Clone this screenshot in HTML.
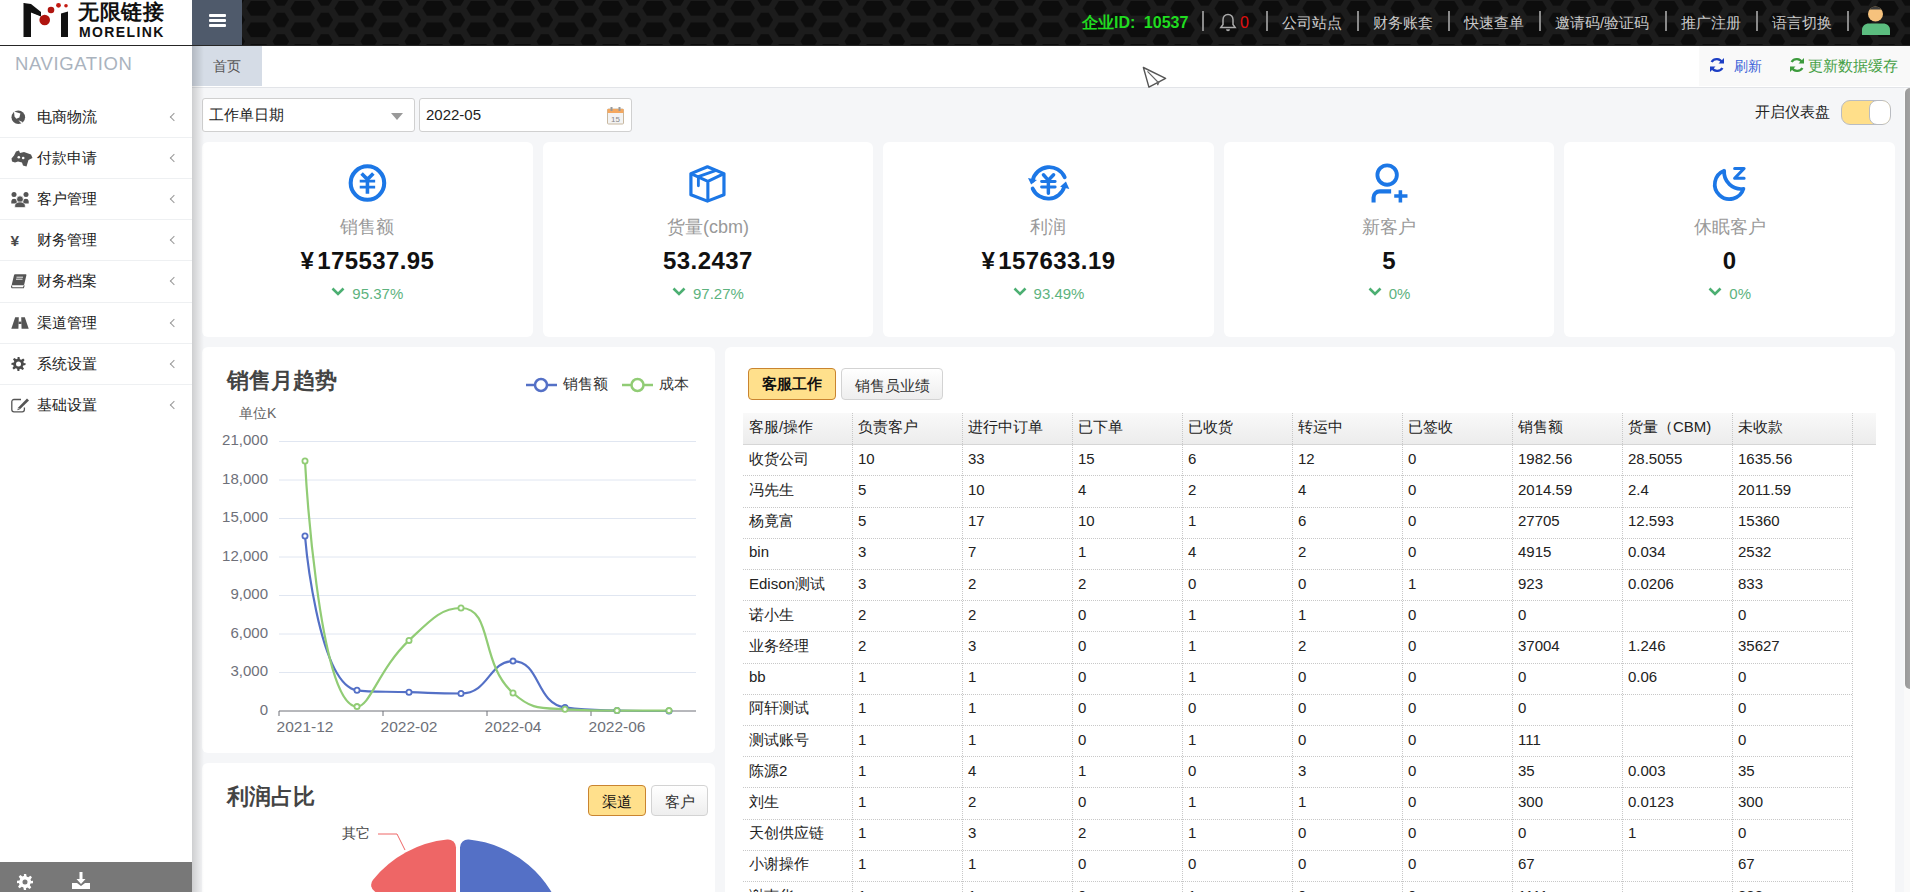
<!DOCTYPE html>
<html><head><meta charset="utf-8">
<style>
*{box-sizing:border-box;margin:0;padding:0}
html,body{width:1910px;height:892px;overflow:hidden;background:#f5f6f8;font-family:"Liberation Sans",sans-serif;color:#333}
.abs{position:absolute}
#hdr{position:absolute;left:0;top:0;width:1910px;height:46px;background:#1b1b1b;border-bottom:1px solid #262626}
#logo{position:absolute;left:0;top:0;width:192px;height:45px;background:#fff}
#ham{position:absolute;left:192px;top:0;width:50px;height:45px;background:#4f5a6b}
#ham i{position:absolute;left:17px;width:17px;height:3px;background:#fff;border-radius:1px}
#side{position:absolute;left:0;top:46px;width:192px;height:846px;background:#fff;z-index:5}
#sshadow{position:absolute;left:192px;top:46px;width:12px;height:846px;background:linear-gradient(90deg,rgba(0,0,0,.16),rgba(0,0,0,0));z-index:4}
#tabbar{position:absolute;left:192px;top:46px;width:1718px;height:42px;background:#fff;border-bottom:1px solid #e2e4e8}
.card{position:absolute;background:#fff;border-radius:6px}
.hl{position:absolute;top:0;height:45px;line-height:45px;font-size:15px;color:#c9c9c9;white-space:nowrap}
.sep{position:absolute;top:11px;width:2px;height:20px;background:#8a8a8a}
.nav{position:absolute;left:0;width:192px;height:41.12px;border-bottom:1px solid #eef0f2}
.nav span{position:absolute;left:37px;top:0;line-height:40px;font-size:15px;color:#222}
.nav svg{position:absolute}
.nav b{position:absolute;left:171px;top:17px;width:6px;height:6px;border-left:1.3px solid #999;border-bottom:1.3px solid #999;transform:rotate(45deg)}
.inp{background:#fff;border:1px solid #d0d0d0;border-radius:3px}
.inp span{position:absolute;top:0;line-height:32px;font-size:15px;color:#222}
.ctr{text-align:center;white-space:nowrap}
.val{font-size:24px;line-height:32px;font-weight:bold;color:#111;letter-spacing:0.4px}
.btn{border:1px solid #d3d3d3;border-radius:4px;background:linear-gradient(#fff,#eee);font-size:14px;color:#333;text-align:center;line-height:29px}
.btn.on{background:#ffe08c;border-color:#c98430;color:#111}
.btn.b{font-weight:bold;font-size:15px;line-height:30px}
.td{font-size:15px;color:#222;padding-left:6px;white-space:nowrap}
.vd{width:0;border-left:1px dotted #c8c8c8}
.hd{height:0;border-top:1px dotted #c8c8c8}
</style></head><body>
<div id="hdr">
  <svg class="abs" style="left:242px;top:0" width="1668" height="45">
    <defs><pattern id="hex" width="44" height="21.5" patternUnits="userSpaceOnUse"><rect width="44" height="21.5" fill="#1c1c1c"/><polygon points="-39.70,-13.10 -35.20,-20.45 -19.60,-20.45 -15.10,-13.10 -19.60,-5.75 -35.20,-5.75" fill="#0d0d0d"/><polygon points="-13.55,-1.60 -9.10,-8.90 -1.30,-8.90 3.15,-1.60 -1.30,5.70 -9.10,5.70" fill="#0d0d0d"/><polygon points="-39.70,8.40 -35.20,1.05 -19.60,1.05 -15.10,8.40 -19.60,15.75 -35.20,15.75" fill="#0d0d0d"/><polygon points="-13.55,19.90 -9.10,12.60 -1.30,12.60 3.15,19.90 -1.30,27.20 -9.10,27.20" fill="#0d0d0d"/><polygon points="-39.70,29.90 -35.20,22.55 -19.60,22.55 -15.10,29.90 -19.60,37.25 -35.20,37.25" fill="#0d0d0d"/><polygon points="-13.55,41.40 -9.10,34.10 -1.30,34.10 3.15,41.40 -1.30,48.70 -9.10,48.70" fill="#0d0d0d"/><polygon points="4.30,-13.10 8.80,-20.45 24.40,-20.45 28.90,-13.10 24.40,-5.75 8.80,-5.75" fill="#0d0d0d"/><polygon points="30.45,-1.60 34.90,-8.90 42.70,-8.90 47.15,-1.60 42.70,5.70 34.90,5.70" fill="#0d0d0d"/><polygon points="4.30,8.40 8.80,1.05 24.40,1.05 28.90,8.40 24.40,15.75 8.80,15.75" fill="#0d0d0d"/><polygon points="30.45,19.90 34.90,12.60 42.70,12.60 47.15,19.90 42.70,27.20 34.90,27.20" fill="#0d0d0d"/><polygon points="4.30,29.90 8.80,22.55 24.40,22.55 28.90,29.90 24.40,37.25 8.80,37.25" fill="#0d0d0d"/><polygon points="30.45,41.40 34.90,34.10 42.70,34.10 47.15,41.40 42.70,48.70 34.90,48.70" fill="#0d0d0d"/><polygon points="48.30,-13.10 52.80,-20.45 68.40,-20.45 72.90,-13.10 68.40,-5.75 52.80,-5.75" fill="#0d0d0d"/><polygon points="74.45,-1.60 78.90,-8.90 86.70,-8.90 91.15,-1.60 86.70,5.70 78.90,5.70" fill="#0d0d0d"/><polygon points="48.30,8.40 52.80,1.05 68.40,1.05 72.90,8.40 68.40,15.75 52.80,15.75" fill="#0d0d0d"/><polygon points="74.45,19.90 78.90,12.60 86.70,12.60 91.15,19.90 86.70,27.20 78.90,27.20" fill="#0d0d0d"/><polygon points="48.30,29.90 52.80,22.55 68.40,22.55 72.90,29.90 68.40,37.25 52.80,37.25" fill="#0d0d0d"/><polygon points="74.45,41.40 78.90,34.10 86.70,34.10 91.15,41.40 86.70,48.70 78.90,48.70" fill="#0d0d0d"/></pattern></defs>
    <rect width="1668" height="45" fill="url(#hex)"/>
  </svg>
  <div class="hl" style="left:1082px;color:#20dc20;font-weight:bold;font-size:16px">企业ID:<i style="margin-left:8.5px"></i>10537</div>
  <div class="sep" style="left:1202px"></div>
  <svg class="abs" style="left:1219px;top:13px" width="18" height="19" viewBox="0 0 18 19"><path d="M9 1.5c-3.2 0-5 2.4-5 5.3v4.7L1.8 14.5h14.4L14 11.5V6.8c0-2.9-1.8-5.3-5-5.3z" fill="none" stroke="#aaa" stroke-width="1.5"/><path d="M7 16.2a2 2 0 0 0 4 0z" fill="#aaa"/></svg>
  <div class="hl" style="left:1240px;color:#e01010;font-size:16px">0</div>
  <div class="sep" style="left:1266px"></div>
  <div class="hl" style="left:1282px">公司站点</div>
  <div class="sep" style="left:1357px"></div>
  <div class="hl" style="left:1373px">财务账套</div>
  <div class="sep" style="left:1448px"></div>
  <div class="hl" style="left:1464px">快速查单</div>
  <div class="sep" style="left:1539px"></div>
  <div class="hl" style="left:1555px">邀请码/验证码</div>
  <div class="sep" style="left:1665px"></div>
  <div class="hl" style="left:1681px">推广注册</div>
  <div class="sep" style="left:1756px"></div>
  <div class="hl" style="left:1772px">语言切换</div>
  <div class="sep" style="left:1847px"></div>
  <svg class="abs" style="left:1861px;top:4px" width="30" height="32" viewBox="0 0 30 32"><path d="M1 31v-5c0-4 3-6.5 7-6.5h14c4 0 7 2.5 7 6.5v5z" fill="#5bbd7f"/><circle cx="14.5" cy="10" r="7.5" fill="#f6c27d"/><path d="M8.5 5.5A7.5 7.5 0 0 1 20.5 5.5z" fill="#3b3b3b"/></svg>
</div>
<div id="logo">
  <svg class="abs" style="left:0;top:0" width="192" height="45" viewBox="0 0 192 45">
    <path d="M23.5 3v34h7.5V12.5L41 16.5V12L31 4z" fill="#111"/>
    <path d="M23.5 3L41 12.5V16L31 12z" fill="#111"/>
    <path d="M61 13.5L68 11.5V37h-7z" fill="#111"/>
    <circle cx="44.7" cy="20" r="5.3" fill="#b0150f"/>
    <circle cx="51" cy="10" r="3.3" fill="#b0150f"/>
    <circle cx="58.5" cy="5.3" r="2.4" fill="#c41a12"/>
    <circle cx="66" cy="5.8" r="1.8" fill="#c41a12"/>
  </svg>
  <div class="abs" style="left:78px;top:-1px;font-size:21px;line-height:26px;color:#111;font-weight:bold;letter-spacing:0.5px">无限链接</div>
  <div class="abs" style="left:79px;top:24px;font-size:14px;line-height:16px;color:#111;font-weight:bold;letter-spacing:1.4px">MORELINK</div>
</div>
<div id="ham"><i style="top:14px"></i><i style="top:19px"></i><i style="top:24px"></i></div>


<div id="tabbar">
  <div class="abs" style="left:0;top:0;width:70px;height:40px;background:#d5dce6;font-size:14px;color:#555;line-height:40px;text-align:center">首页</div>
  <div class="abs" style="left:1507px;top:0;width:211px;height:40px;background:#f9f9f9"></div>
  <svg class="abs" style="left:1517px;top:11px" width="16" height="16" viewBox="0 0 16 16"><path d="M13.2 5.6A6 6 0 0 0 2.6 5" fill="none" stroke="#1d3fc4" stroke-width="2.4"/><path d="M15 1v5.5H9.5z" fill="#1d3fc4"/><path d="M2.8 10.4A6 6 0 0 0 13.4 11" fill="none" stroke="#1d3fc4" stroke-width="2.4"/><path d="M1 15V9.5h5.5z" fill="#1d3fc4"/></svg>
  <div class="abs" style="left:1542px;top:0;line-height:40px;font-size:14px;color:#3a62d8">刷新</div>
  <svg class="abs" style="left:1597px;top:11px" width="16" height="16" viewBox="0 0 16 16"><path d="M13.2 5.6A6 6 0 0 0 2.6 5" fill="none" stroke="#3d9b3d" stroke-width="2.4"/><path d="M15 1v5.5H9.5z" fill="#3d9b3d"/><path d="M2.8 10.4A6 6 0 0 0 13.4 11" fill="none" stroke="#3d9b3d" stroke-width="2.4"/><path d="M1 15V9.5h5.5z" fill="#3d9b3d"/></svg>
  <div class="abs" style="left:1616px;top:0;line-height:40px;font-size:15px;color:#45a045">更新数据缓存</div>
</div>
<div class="abs inp" style="left:202px;top:98px;width:213px;height:34px">
  <span style="left:6px">工作单日期</span>
  <div class="abs" style="left:188px;top:14px;width:0;height:0;border-left:6px solid transparent;border-right:6px solid transparent;border-top:7px solid #999"></div>
</div>
<div class="abs inp" style="left:419px;top:98px;width:213px;height:34px">
  <span style="left:6px;font-size:15px">2022-05</span>
  <svg class="abs" style="left:186px;top:7px" width="19" height="19" viewBox="0 0 19 19"><rect x="1.5" y="3" width="16" height="15" rx="1" fill="#f3f3f3" stroke="#c8b8a0"/><rect x="1.5" y="3" width="16" height="4" fill="#f4a860"/><rect x="4.5" y="1" width="2" height="4" fill="#999"/><rect x="12.5" y="1" width="2" height="4" fill="#999"/><text x="9.5" y="15.5" font-size="8" text-anchor="middle" fill="#888" font-family="Liberation Sans">15</text></svg>
</div>
<div class="abs" style="left:1755px;top:101px;font-size:15px;line-height:22px;color:#222">开启仪表盘</div>
<div class="abs" style="left:1841px;top:100px;width:50px;height:25px;border:1px solid #b9bcc2;border-radius:9px;background:#ffdf8a;overflow:hidden">
  <div class="abs" style="left:27px;top:-1px;width:22px;height:25px;border:1px solid #b9bcc2;border-radius:8px;background:#fff"></div>
</div>
<div class="card" style="left:202px;top:142px;width:330.6px;height:195px"></div>
<div class="abs" style="left:340px;top:155px"><svg width="60" height="55" viewBox="0 0 973 892"><circle cx="445" cy="455" r="272" fill="none" stroke="#1c77e6" stroke-width="66"/><path d="M370 320L445 395L520 320M445 395V600" fill="none" stroke="#1c77e6" stroke-width="58" stroke-linecap="square"/><path d="M320 425H570M320 520H570" stroke="#1c77e6" stroke-width="46"/></svg></div>
<div class="abs ctr" style="left:202px;top:215px;width:330.6px;font-size:18px;line-height:24px;color:#999">销售额</div>
<div class="abs ctr val" style="left:202px;top:245px;width:330.6px">¥<i style="margin-left:3px"></i>175537.95</div>
<div class="abs ctr" style="left:202px;top:284px;width:330.6px;font-size:15px;line-height:20px;color:#5db37e"><svg width="14" height="9" viewBox="0 0 14 9" style="vertical-align:3px;margin-right:7px"><path d="M1.5 1.5L7 7L12.5 1.5" fill="none" stroke="#4caf72" stroke-width="2.6"/></svg>95.37%</div>
<div class="card" style="left:542.6px;top:142px;width:330.6px;height:195px"></div>
<div class="abs" style="left:680px;top:155px"><svg width="60" height="55" viewBox="0 0 973 892"><path d="M445 192L713 302V643L445 748L177 643V302Z" fill="none" stroke="#1c77e6" stroke-width="52" stroke-linejoin="round"/><path d="M177 302L452 428L713 302M452 428V748" fill="none" stroke="#1c77e6" stroke-width="50"/><path d="M298 352L585 250M298 352V500" fill="none" stroke="#1c77e6" stroke-width="46" stroke-linecap="round"/></svg></div>
<div class="abs ctr" style="left:542.6px;top:215px;width:330.6px;font-size:18px;line-height:24px;color:#999">货量(cbm)</div>
<div class="abs ctr val" style="left:542.6px;top:245px;width:330.6px">53.2437</div>
<div class="abs ctr" style="left:542.6px;top:284px;width:330.6px;font-size:15px;line-height:20px;color:#5db37e"><svg width="14" height="9" viewBox="0 0 14 9" style="vertical-align:3px;margin-right:7px"><path d="M1.5 1.5L7 7L12.5 1.5" fill="none" stroke="#4caf72" stroke-width="2.6"/></svg>97.27%</div>
<div class="card" style="left:883.2px;top:142px;width:330.6px;height:195px"></div>
<div class="abs" style="left:1020px;top:155px"><svg width="60" height="55" viewBox="0 0 973 892"><path d="M205 415A275 275 0 0 1 725 360" fill="none" stroke="#1c77e6" stroke-width="62" stroke-linecap="round"/><path d="M205 545A275 275 0 0 0 720 510" fill="none" stroke="#1c77e6" stroke-width="62" stroke-linecap="round"/><path d="M130 375L275 405L180 480Z" fill="#1c77e6"/><path d="M745 430L800 550L650 515Z" fill="#1c77e6"/><path d="M380 320L460 410L545 320M460 410V620" fill="none" stroke="#1c77e6" stroke-width="56" stroke-linecap="round"/><path d="M350 430H570M350 520H570" stroke="#1c77e6" stroke-width="48" stroke-linecap="round"/></svg></div>
<div class="abs ctr" style="left:883.2px;top:215px;width:330.6px;font-size:18px;line-height:24px;color:#999">利润</div>
<div class="abs ctr val" style="left:883.2px;top:245px;width:330.6px">¥<i style="margin-left:3px"></i>157633.19</div>
<div class="abs ctr" style="left:883.2px;top:284px;width:330.6px;font-size:15px;line-height:20px;color:#5db37e"><svg width="14" height="9" viewBox="0 0 14 9" style="vertical-align:3px;margin-right:7px"><path d="M1.5 1.5L7 7L12.5 1.5" fill="none" stroke="#4caf72" stroke-width="2.6"/></svg>93.49%</div>
<div class="card" style="left:1223.8px;top:142px;width:330.6px;height:195px"></div>
<div class="abs" style="left:1360px;top:155px"><svg width="60" height="55" viewBox="0 0 973 892"><circle cx="440" cy="325" r="158" fill="none" stroke="#1c77e6" stroke-width="62"/><path d="M220 770V690A100 100 0 0 1 320 590H505" fill="none" stroke="#1c77e6" stroke-width="66"/><path d="M655 570V770M555 665H770" stroke="#1c77e6" stroke-width="58"/></svg></div>
<div class="abs ctr" style="left:1223.8px;top:215px;width:330.6px;font-size:18px;line-height:24px;color:#999">新客户</div>
<div class="abs ctr val" style="left:1223.8px;top:245px;width:330.6px">5</div>
<div class="abs ctr" style="left:1223.8px;top:284px;width:330.6px;font-size:15px;line-height:20px;color:#5db37e"><svg width="14" height="9" viewBox="0 0 14 9" style="vertical-align:3px;margin-right:7px"><path d="M1.5 1.5L7 7L12.5 1.5" fill="none" stroke="#4caf72" stroke-width="2.6"/></svg>0%</div>
<div class="card" style="left:1564.4px;top:142px;width:330.6px;height:195px"></div>
<div class="abs" style="left:1700px;top:155px"><svg width="60" height="55" viewBox="0 0 973 892"><path d="M392 255A238 238 0 1 0 705 548A275 275 0 0 1 392 255Z" fill="none" stroke="#1c77e6" stroke-width="60" stroke-linejoin="round"/><path d="M562 218H715L562 378H715" fill="none" stroke="#1c77e6" stroke-width="50" stroke-linejoin="round" stroke-linecap="round"/></svg></div>
<div class="abs ctr" style="left:1564.4px;top:215px;width:330.6px;font-size:18px;line-height:24px;color:#999">休眠客户</div>
<div class="abs ctr val" style="left:1564.4px;top:245px;width:330.6px">0</div>
<div class="abs ctr" style="left:1564.4px;top:284px;width:330.6px;font-size:15px;line-height:20px;color:#5db37e"><svg width="14" height="9" viewBox="0 0 14 9" style="vertical-align:3px;margin-right:7px"><path d="M1.5 1.5L7 7L12.5 1.5" fill="none" stroke="#4caf72" stroke-width="2.6"/></svg>0%</div>
<div class="card" style="left:202px;top:347px;width:513px;height:406px"></div>
<div class="abs" style="left:227px;top:366px;font-size:22px;line-height:30px;font-weight:bold;color:#444">销售月趋势</div>
<svg class="abs" style="left:0;top:0" width="1910" height="892">
<line x1="279" x2="696" y1="441.5" y2="441.5" stroke="#e0e6f1" stroke-width="1"/>
<line x1="279" x2="696" y1="480.0" y2="480.0" stroke="#e0e6f1" stroke-width="1"/>
<line x1="279" x2="696" y1="518.5" y2="518.5" stroke="#e0e6f1" stroke-width="1"/>
<line x1="279" x2="696" y1="557.0" y2="557.0" stroke="#e0e6f1" stroke-width="1"/>
<line x1="279" x2="696" y1="595.5" y2="595.5" stroke="#e0e6f1" stroke-width="1"/>
<line x1="279" x2="696" y1="634.0" y2="634.0" stroke="#e0e6f1" stroke-width="1"/>
<line x1="279" x2="696" y1="672.5" y2="672.5" stroke="#e0e6f1" stroke-width="1"/>
<text x="268" y="445.0" text-anchor="end" font-size="15" fill="#6e7079" font-family="Liberation Sans">21,000</text>
<text x="268" y="483.5" text-anchor="end" font-size="15" fill="#6e7079" font-family="Liberation Sans">18,000</text>
<text x="268" y="522.0" text-anchor="end" font-size="15" fill="#6e7079" font-family="Liberation Sans">15,000</text>
<text x="268" y="560.5" text-anchor="end" font-size="15" fill="#6e7079" font-family="Liberation Sans">12,000</text>
<text x="268" y="599.0" text-anchor="end" font-size="15" fill="#6e7079" font-family="Liberation Sans">9,000</text>
<text x="268" y="637.5" text-anchor="end" font-size="15" fill="#6e7079" font-family="Liberation Sans">6,000</text>
<text x="268" y="676.0" text-anchor="end" font-size="15" fill="#6e7079" font-family="Liberation Sans">3,000</text>
<text x="268" y="714.5" text-anchor="end" font-size="15" fill="#6e7079" font-family="Liberation Sans">0</text>
<line x1="279" x2="696" y1="711" y2="711" stroke="#6e7079" stroke-width="1"/>
<line x1="279" x2="279" y1="711" y2="716" stroke="#6e7079" stroke-width="1"/>
<line x1="383" x2="383" y1="711" y2="716" stroke="#6e7079" stroke-width="1"/>
<line x1="487" x2="487" y1="711" y2="716" stroke="#6e7079" stroke-width="1"/>
<line x1="591" x2="591" y1="711" y2="716" stroke="#6e7079" stroke-width="1"/>
<text x="305" y="732" text-anchor="middle" font-size="15.5" fill="#6e7079" font-family="Liberation Sans">2021-12</text>
<text x="409" y="732" text-anchor="middle" font-size="15.5" fill="#6e7079" font-family="Liberation Sans">2022-02</text>
<text x="513" y="732" text-anchor="middle" font-size="15.5" fill="#6e7079" font-family="Liberation Sans">2022-04</text>
<text x="617" y="732" text-anchor="middle" font-size="15.5" fill="#6e7079" font-family="Liberation Sans">2022-06</text>
<path d="M305.0 536.0 C305.0 536.0 317.6 684.4 357.0 690.3 C369.6 692.2 383.0 691.4 409.0 692.2 C435.0 693.0 437.1 693.5 461.0 693.5 C489.1 693.5 488.7 661.1 513.0 661.1 C540.7 661.1 535.3 703.3 565.0 707.4 C587.3 710.5 591.0 710.0 617.0 710.5 C643.0 711.0 669.0 711.0 669.0 711.0" fill="none" stroke="#5470c6" stroke-width="2.2"/>
<path d="M305.0 461.0 C305.0 461.0 318.1 706.6 357.0 706.6 C370.1 706.6 378.9 668.9 409.0 640.4 C430.9 619.6 441.2 608.0 461.0 608.0 C493.2 608.0 479.4 663.2 513.0 693.0 C531.4 709.3 538.4 707.9 565.0 709.3 C590.4 710.6 591.0 710.6 617.0 710.6 C643.0 710.6 669.0 710.6 669.0 710.6" fill="none" stroke="#91cc75" stroke-width="2.2"/>
<circle cx="305" cy="536" r="2.6" fill="#fff" stroke="#5470c6" stroke-width="1.8"/>
<circle cx="357" cy="690.3" r="2.6" fill="#fff" stroke="#5470c6" stroke-width="1.8"/>
<circle cx="409" cy="692.2" r="2.6" fill="#fff" stroke="#5470c6" stroke-width="1.8"/>
<circle cx="461" cy="693.5" r="2.6" fill="#fff" stroke="#5470c6" stroke-width="1.8"/>
<circle cx="513" cy="661.1" r="2.6" fill="#fff" stroke="#5470c6" stroke-width="1.8"/>
<circle cx="565" cy="707.4" r="2.6" fill="#fff" stroke="#5470c6" stroke-width="1.8"/>
<circle cx="617" cy="710.5" r="2.6" fill="#fff" stroke="#5470c6" stroke-width="1.8"/>
<circle cx="669" cy="711" r="2.6" fill="#fff" stroke="#5470c6" stroke-width="1.8"/>
<circle cx="305" cy="461" r="2.6" fill="#fff" stroke="#91cc75" stroke-width="1.8"/>
<circle cx="357" cy="706.6" r="2.6" fill="#fff" stroke="#91cc75" stroke-width="1.8"/>
<circle cx="409" cy="640.4" r="2.6" fill="#fff" stroke="#91cc75" stroke-width="1.8"/>
<circle cx="461" cy="608" r="2.6" fill="#fff" stroke="#91cc75" stroke-width="1.8"/>
<circle cx="513" cy="693" r="2.6" fill="#fff" stroke="#91cc75" stroke-width="1.8"/>
<circle cx="565" cy="709.3" r="2.6" fill="#fff" stroke="#91cc75" stroke-width="1.8"/>
<circle cx="617" cy="710.6" r="2.6" fill="#fff" stroke="#91cc75" stroke-width="1.8"/>
<circle cx="669" cy="710.6" r="2.6" fill="#fff" stroke="#91cc75" stroke-width="1.8"/>
<line x1="526" x2="557" y1="385" y2="385" stroke="#5470c6" stroke-width="2.5"/><circle cx="541" cy="385" r="6" fill="#fff" stroke="#5470c6" stroke-width="2.5"/>
<line x1="622" x2="653" y1="385" y2="385" stroke="#91cc75" stroke-width="2.5"/><circle cx="637.5" cy="385" r="6" fill="#fff" stroke="#91cc75" stroke-width="2.5"/>
<text x="563" y="388.5" font-size="15" fill="#333" font-family="Liberation Sans">销售额</text>
<text x="659" y="388.5" font-size="15" fill="#333" font-family="Liberation Sans">成本</text>
<text x="239" y="418" font-size="14" fill="#666" font-family="Liberation Sans">单位K</text>
</svg>
<div class="card" style="left:202px;top:763px;width:513px;height:200px"></div>
<div class="abs" style="left:227px;top:782px;font-size:22px;line-height:30px;font-weight:bold;color:#444">利润占比</div>
<div class="abs btn on" style="left:588px;top:785px;width:58px;height:31px;font-size:15px;line-height:31px;font-weight:500">渠道</div>
<div class="abs btn" style="left:651px;top:785px;width:57px;height:31px;font-size:15px;line-height:31px">客户</div>
<svg class="abs" style="left:0;top:0" width="1910" height="892">
<path d="M455.73 944.14 L374.80 891.58 A8 8 0 0 1 372.91 879.88 A109 109 0 0 1 447.21 839.54 A8 8 0 0 1 456.00 847.50 L456.00 944.00 Z" fill="#ee6666"/>
<path d="M460.00 944.00 L460.00 847.50 A8 8 0 0 1 468.79 839.54 A109 109 0 0 1 521.58 1036.54 A8 8 0 0 1 509.98 1034.04 L461.73 950.46 Z" fill="#5470c6"/>
<polyline points="378,834 397,834 405,850" fill="none" stroke="#ee6666" stroke-width="1"/>
<text x="342" y="838" font-size="14" fill="#444" font-family="Liberation Sans">其它</text>
</svg>
<div class="card" style="left:725px;top:347px;width:1170px;height:600px"></div>
<div class="abs btn on b" style="left:748px;top:368px;width:88px;height:32px">客服工作</div>
<div class="abs btn" style="left:841px;top:368px;width:102px;height:32px;font-size:15px;line-height:33px">销售员业绩</div>
<div class="abs" style="left:743px;top:413px;width:1133px;height:32px;background:linear-gradient(#f9f9f9,#ececec);border-bottom:1px solid #d6d6d6"></div>
<div class="abs td" style="left:743px;top:411px;line-height:31px">客服/操作</div>
<div class="abs td" style="left:852px;top:411px;line-height:31px">负责客户</div>
<div class="abs td" style="left:962px;top:411px;line-height:31px">进行中订单</div>
<div class="abs td" style="left:1072px;top:411px;line-height:31px">已下单</div>
<div class="abs td" style="left:1182px;top:411px;line-height:31px">已收货</div>
<div class="abs td" style="left:1292px;top:411px;line-height:31px">转运中</div>
<div class="abs td" style="left:1402px;top:411px;line-height:31px">已签收</div>
<div class="abs td" style="left:1512px;top:411px;line-height:31px">销售额</div>
<div class="abs td" style="left:1622px;top:411px;line-height:31px">货量（CBM)</div>
<div class="abs td" style="left:1732px;top:411px;line-height:31px">未收款</div>
<div class="abs vd" style="left:852px;top:413px;height:479px"></div>
<div class="abs vd" style="left:962px;top:413px;height:479px"></div>
<div class="abs vd" style="left:1072px;top:413px;height:479px"></div>
<div class="abs vd" style="left:1182px;top:413px;height:479px"></div>
<div class="abs vd" style="left:1292px;top:413px;height:479px"></div>
<div class="abs vd" style="left:1402px;top:413px;height:479px"></div>
<div class="abs vd" style="left:1512px;top:413px;height:479px"></div>
<div class="abs vd" style="left:1622px;top:413px;height:479px"></div>
<div class="abs vd" style="left:1732px;top:413px;height:479px"></div>
<div class="abs vd" style="left:1852px;top:413px;height:479px"></div>
<div class="abs td" style="left:743px;top:443.8px;line-height:30px">收货公司</div>
<div class="abs td" style="left:852px;top:443.8px;line-height:30px">10</div>
<div class="abs td" style="left:962px;top:443.8px;line-height:30px">33</div>
<div class="abs td" style="left:1072px;top:443.8px;line-height:30px">15</div>
<div class="abs td" style="left:1182px;top:443.8px;line-height:30px">6</div>
<div class="abs td" style="left:1292px;top:443.8px;line-height:30px">12</div>
<div class="abs td" style="left:1402px;top:443.8px;line-height:30px">0</div>
<div class="abs td" style="left:1512px;top:443.8px;line-height:30px">1982.56</div>
<div class="abs td" style="left:1622px;top:443.8px;line-height:30px">28.5055</div>
<div class="abs td" style="left:1732px;top:443.8px;line-height:30px">1635.56</div>
<div class="abs hd" style="left:743px;top:475.4px;width:1109px"></div>
<div class="abs td" style="left:743px;top:475.0px;line-height:30px">冯先生</div>
<div class="abs td" style="left:852px;top:475.0px;line-height:30px">5</div>
<div class="abs td" style="left:962px;top:475.0px;line-height:30px">10</div>
<div class="abs td" style="left:1072px;top:475.0px;line-height:30px">4</div>
<div class="abs td" style="left:1182px;top:475.0px;line-height:30px">2</div>
<div class="abs td" style="left:1292px;top:475.0px;line-height:30px">4</div>
<div class="abs td" style="left:1402px;top:475.0px;line-height:30px">0</div>
<div class="abs td" style="left:1512px;top:475.0px;line-height:30px">2014.59</div>
<div class="abs td" style="left:1622px;top:475.0px;line-height:30px">2.4</div>
<div class="abs td" style="left:1732px;top:475.0px;line-height:30px">2011.59</div>
<div class="abs hd" style="left:743px;top:506.6px;width:1109px"></div>
<div class="abs td" style="left:743px;top:506.2px;line-height:30px">杨竟富</div>
<div class="abs td" style="left:852px;top:506.2px;line-height:30px">5</div>
<div class="abs td" style="left:962px;top:506.2px;line-height:30px">17</div>
<div class="abs td" style="left:1072px;top:506.2px;line-height:30px">10</div>
<div class="abs td" style="left:1182px;top:506.2px;line-height:30px">1</div>
<div class="abs td" style="left:1292px;top:506.2px;line-height:30px">6</div>
<div class="abs td" style="left:1402px;top:506.2px;line-height:30px">0</div>
<div class="abs td" style="left:1512px;top:506.2px;line-height:30px">27705</div>
<div class="abs td" style="left:1622px;top:506.2px;line-height:30px">12.593</div>
<div class="abs td" style="left:1732px;top:506.2px;line-height:30px">15360</div>
<div class="abs hd" style="left:743px;top:537.8px;width:1109px"></div>
<div class="abs td" style="left:743px;top:537.4px;line-height:30px">bin</div>
<div class="abs td" style="left:852px;top:537.4px;line-height:30px">3</div>
<div class="abs td" style="left:962px;top:537.4px;line-height:30px">7</div>
<div class="abs td" style="left:1072px;top:537.4px;line-height:30px">1</div>
<div class="abs td" style="left:1182px;top:537.4px;line-height:30px">4</div>
<div class="abs td" style="left:1292px;top:537.4px;line-height:30px">2</div>
<div class="abs td" style="left:1402px;top:537.4px;line-height:30px">0</div>
<div class="abs td" style="left:1512px;top:537.4px;line-height:30px">4915</div>
<div class="abs td" style="left:1622px;top:537.4px;line-height:30px">0.034</div>
<div class="abs td" style="left:1732px;top:537.4px;line-height:30px">2532</div>
<div class="abs hd" style="left:743px;top:569.0px;width:1109px"></div>
<div class="abs td" style="left:743px;top:568.6px;line-height:30px">Edison测试</div>
<div class="abs td" style="left:852px;top:568.6px;line-height:30px">3</div>
<div class="abs td" style="left:962px;top:568.6px;line-height:30px">2</div>
<div class="abs td" style="left:1072px;top:568.6px;line-height:30px">2</div>
<div class="abs td" style="left:1182px;top:568.6px;line-height:30px">0</div>
<div class="abs td" style="left:1292px;top:568.6px;line-height:30px">0</div>
<div class="abs td" style="left:1402px;top:568.6px;line-height:30px">1</div>
<div class="abs td" style="left:1512px;top:568.6px;line-height:30px">923</div>
<div class="abs td" style="left:1622px;top:568.6px;line-height:30px">0.0206</div>
<div class="abs td" style="left:1732px;top:568.6px;line-height:30px">833</div>
<div class="abs hd" style="left:743px;top:600.2px;width:1109px"></div>
<div class="abs td" style="left:743px;top:599.8px;line-height:30px">诺小生</div>
<div class="abs td" style="left:852px;top:599.8px;line-height:30px">2</div>
<div class="abs td" style="left:962px;top:599.8px;line-height:30px">2</div>
<div class="abs td" style="left:1072px;top:599.8px;line-height:30px">0</div>
<div class="abs td" style="left:1182px;top:599.8px;line-height:30px">1</div>
<div class="abs td" style="left:1292px;top:599.8px;line-height:30px">1</div>
<div class="abs td" style="left:1402px;top:599.8px;line-height:30px">0</div>
<div class="abs td" style="left:1512px;top:599.8px;line-height:30px">0</div>
<div class="abs td" style="left:1622px;top:599.8px;line-height:30px"></div>
<div class="abs td" style="left:1732px;top:599.8px;line-height:30px">0</div>
<div class="abs hd" style="left:743px;top:631.4px;width:1109px"></div>
<div class="abs td" style="left:743px;top:631.0px;line-height:30px">业务经理</div>
<div class="abs td" style="left:852px;top:631.0px;line-height:30px">2</div>
<div class="abs td" style="left:962px;top:631.0px;line-height:30px">3</div>
<div class="abs td" style="left:1072px;top:631.0px;line-height:30px">0</div>
<div class="abs td" style="left:1182px;top:631.0px;line-height:30px">1</div>
<div class="abs td" style="left:1292px;top:631.0px;line-height:30px">2</div>
<div class="abs td" style="left:1402px;top:631.0px;line-height:30px">0</div>
<div class="abs td" style="left:1512px;top:631.0px;line-height:30px">37004</div>
<div class="abs td" style="left:1622px;top:631.0px;line-height:30px">1.246</div>
<div class="abs td" style="left:1732px;top:631.0px;line-height:30px">35627</div>
<div class="abs hd" style="left:743px;top:662.6px;width:1109px"></div>
<div class="abs td" style="left:743px;top:662.2px;line-height:30px">bb</div>
<div class="abs td" style="left:852px;top:662.2px;line-height:30px">1</div>
<div class="abs td" style="left:962px;top:662.2px;line-height:30px">1</div>
<div class="abs td" style="left:1072px;top:662.2px;line-height:30px">0</div>
<div class="abs td" style="left:1182px;top:662.2px;line-height:30px">1</div>
<div class="abs td" style="left:1292px;top:662.2px;line-height:30px">0</div>
<div class="abs td" style="left:1402px;top:662.2px;line-height:30px">0</div>
<div class="abs td" style="left:1512px;top:662.2px;line-height:30px">0</div>
<div class="abs td" style="left:1622px;top:662.2px;line-height:30px">0.06</div>
<div class="abs td" style="left:1732px;top:662.2px;line-height:30px">0</div>
<div class="abs hd" style="left:743px;top:693.8px;width:1109px"></div>
<div class="abs td" style="left:743px;top:693.4px;line-height:30px">阿轩测试</div>
<div class="abs td" style="left:852px;top:693.4px;line-height:30px">1</div>
<div class="abs td" style="left:962px;top:693.4px;line-height:30px">1</div>
<div class="abs td" style="left:1072px;top:693.4px;line-height:30px">0</div>
<div class="abs td" style="left:1182px;top:693.4px;line-height:30px">0</div>
<div class="abs td" style="left:1292px;top:693.4px;line-height:30px">0</div>
<div class="abs td" style="left:1402px;top:693.4px;line-height:30px">0</div>
<div class="abs td" style="left:1512px;top:693.4px;line-height:30px">0</div>
<div class="abs td" style="left:1622px;top:693.4px;line-height:30px"></div>
<div class="abs td" style="left:1732px;top:693.4px;line-height:30px">0</div>
<div class="abs hd" style="left:743px;top:725.0px;width:1109px"></div>
<div class="abs td" style="left:743px;top:724.6px;line-height:30px">测试账号</div>
<div class="abs td" style="left:852px;top:724.6px;line-height:30px">1</div>
<div class="abs td" style="left:962px;top:724.6px;line-height:30px">1</div>
<div class="abs td" style="left:1072px;top:724.6px;line-height:30px">0</div>
<div class="abs td" style="left:1182px;top:724.6px;line-height:30px">1</div>
<div class="abs td" style="left:1292px;top:724.6px;line-height:30px">0</div>
<div class="abs td" style="left:1402px;top:724.6px;line-height:30px">0</div>
<div class="abs td" style="left:1512px;top:724.6px;line-height:30px">111</div>
<div class="abs td" style="left:1622px;top:724.6px;line-height:30px"></div>
<div class="abs td" style="left:1732px;top:724.6px;line-height:30px">0</div>
<div class="abs hd" style="left:743px;top:756.2px;width:1109px"></div>
<div class="abs td" style="left:743px;top:755.8px;line-height:30px">陈源2</div>
<div class="abs td" style="left:852px;top:755.8px;line-height:30px">1</div>
<div class="abs td" style="left:962px;top:755.8px;line-height:30px">4</div>
<div class="abs td" style="left:1072px;top:755.8px;line-height:30px">1</div>
<div class="abs td" style="left:1182px;top:755.8px;line-height:30px">0</div>
<div class="abs td" style="left:1292px;top:755.8px;line-height:30px">3</div>
<div class="abs td" style="left:1402px;top:755.8px;line-height:30px">0</div>
<div class="abs td" style="left:1512px;top:755.8px;line-height:30px">35</div>
<div class="abs td" style="left:1622px;top:755.8px;line-height:30px">0.003</div>
<div class="abs td" style="left:1732px;top:755.8px;line-height:30px">35</div>
<div class="abs hd" style="left:743px;top:787.4px;width:1109px"></div>
<div class="abs td" style="left:743px;top:787.0px;line-height:30px">刘生</div>
<div class="abs td" style="left:852px;top:787.0px;line-height:30px">1</div>
<div class="abs td" style="left:962px;top:787.0px;line-height:30px">2</div>
<div class="abs td" style="left:1072px;top:787.0px;line-height:30px">0</div>
<div class="abs td" style="left:1182px;top:787.0px;line-height:30px">1</div>
<div class="abs td" style="left:1292px;top:787.0px;line-height:30px">1</div>
<div class="abs td" style="left:1402px;top:787.0px;line-height:30px">0</div>
<div class="abs td" style="left:1512px;top:787.0px;line-height:30px">300</div>
<div class="abs td" style="left:1622px;top:787.0px;line-height:30px">0.0123</div>
<div class="abs td" style="left:1732px;top:787.0px;line-height:30px">300</div>
<div class="abs hd" style="left:743px;top:818.6px;width:1109px"></div>
<div class="abs td" style="left:743px;top:818.2px;line-height:30px">天创供应链</div>
<div class="abs td" style="left:852px;top:818.2px;line-height:30px">1</div>
<div class="abs td" style="left:962px;top:818.2px;line-height:30px">3</div>
<div class="abs td" style="left:1072px;top:818.2px;line-height:30px">2</div>
<div class="abs td" style="left:1182px;top:818.2px;line-height:30px">1</div>
<div class="abs td" style="left:1292px;top:818.2px;line-height:30px">0</div>
<div class="abs td" style="left:1402px;top:818.2px;line-height:30px">0</div>
<div class="abs td" style="left:1512px;top:818.2px;line-height:30px">0</div>
<div class="abs td" style="left:1622px;top:818.2px;line-height:30px">1</div>
<div class="abs td" style="left:1732px;top:818.2px;line-height:30px">0</div>
<div class="abs hd" style="left:743px;top:849.8px;width:1109px"></div>
<div class="abs td" style="left:743px;top:849.4px;line-height:30px">小谢操作</div>
<div class="abs td" style="left:852px;top:849.4px;line-height:30px">1</div>
<div class="abs td" style="left:962px;top:849.4px;line-height:30px">1</div>
<div class="abs td" style="left:1072px;top:849.4px;line-height:30px">0</div>
<div class="abs td" style="left:1182px;top:849.4px;line-height:30px">0</div>
<div class="abs td" style="left:1292px;top:849.4px;line-height:30px">0</div>
<div class="abs td" style="left:1402px;top:849.4px;line-height:30px">0</div>
<div class="abs td" style="left:1512px;top:849.4px;line-height:30px">67</div>
<div class="abs td" style="left:1622px;top:849.4px;line-height:30px"></div>
<div class="abs td" style="left:1732px;top:849.4px;line-height:30px">67</div>
<div class="abs hd" style="left:743px;top:881.0px;width:1109px"></div>
<div class="abs td" style="left:743px;top:880.6px;line-height:30px">谢南华</div>
<div class="abs td" style="left:852px;top:880.6px;line-height:30px">1</div>
<div class="abs td" style="left:962px;top:880.6px;line-height:30px">1</div>
<div class="abs td" style="left:1072px;top:880.6px;line-height:30px">0</div>
<div class="abs td" style="left:1182px;top:880.6px;line-height:30px">1</div>
<div class="abs td" style="left:1292px;top:880.6px;line-height:30px">0</div>
<div class="abs td" style="left:1402px;top:880.6px;line-height:30px">0</div>
<div class="abs td" style="left:1512px;top:880.6px;line-height:30px">1111</div>
<div class="abs td" style="left:1622px;top:880.6px;line-height:30px"></div>
<div class="abs td" style="left:1732px;top:880.6px;line-height:30px">888</div>
<div class="abs hd" style="left:743px;top:912.2px;width:1109px"></div>
<svg class="abs" style="left:1135px;top:60px;z-index:8" width="40" height="35" viewBox="0 0 40 35"><path d="M8.4 7.5L30.6 18.4L13.9 27.1Z" fill="#fff" stroke="#555" stroke-width="1.4" stroke-linejoin="round"/><path d="M12.5 11.4L22.4 21.6L22.7 25.1L24.2 21.3" fill="none" stroke="#666" stroke-width="1.2"/></svg>
<div class="abs" style="left:1904px;top:88px;width:6px;height:804px;background:#fafafa"></div>
<div class="abs" style="left:1905px;top:88px;width:10px;height:601px;border-radius:5px;background:linear-gradient(90deg,#9a9a9a,#a9a9a9)"></div>
<div id="sshadow"></div>
<div id="side">
  <div class="abs" style="left:15px;top:7px;font-size:18.5px;line-height:22px;color:#aab3be;letter-spacing:0.6px">NAVIGATION</div>
    <div class="nav" style="top:51.00px"><svg style="left:10.5px;top:13px" width="15" height="15" viewBox="0 0 15 15"><circle cx="7.3" cy="7.3" r="6.8" fill="#555"/><path d="M3 1.4L9.4 3.5L8.4 7.6L5.3 8.8L3.5 6.5Z" fill="#fff"/><path d="M7.4 10.2L11.6 12L10.3 13.4Z" fill="#fff"/></svg><span>电商物流</span><b></b></div>
  <div class="nav" style="top:92.12px"><svg style="left:10.5px;top:11.5px" width="22" height="18" viewBox="0 0 22 18"><path d="M0.5 8.5L3 5.5L5 1.5L8 0.5L9 3L13 2L20 4.5L21.5 8L17.5 10L15.5 16.5L12 15.5L11 12.5L7 11.5L4 12.5L1 11.5Z" fill="#555"/><circle cx="7.8" cy="7.3" r="1.3" fill="#fff"/><circle cx="12.2" cy="8" r="1.3" fill="#fff"/></svg><span>付款申请</span><b></b></div>
  <div class="nav" style="top:133.24px"><svg style="left:10.5px;top:11.5px" width="18" height="17" viewBox="0 0 18 17"><circle cx="3" cy="3.5" r="2.5" fill="#555"/><circle cx="15" cy="3.5" r="2.5" fill="#555"/><path d="M0.3 12.5V10A2.8 2.8 0 0 1 5.8 10V12.5Z" fill="#555"/><path d="M12.2 12.5V10A2.8 2.8 0 0 1 17.7 10V12.5Z" fill="#555"/><circle cx="9" cy="8.2" r="3.4" fill="#555" stroke="#fff" stroke-width=".8"/><path d="M3.8 16.5V14.5A5.2 3.6 0 0 1 14.2 14.5V16.5Z" fill="#555" stroke="#fff" stroke-width=".6"/></svg><span>客户管理</span><b></b></div>
  <div class="nav" style="top:174.36px"><div class="abs" style="left:10.5px;top:12px;font-size:15.5px;font-weight:bold;color:#4a4a4a;line-height:17px">¥</div><span>财务管理</span><b></b></div>
  <div class="nav" style="top:215.48px"><svg style="left:10.5px;top:13px" width="16" height="15" viewBox="0 0 16 15"><path d="M4 0.3H14.8Q15.6 0.3 15.4 1.2L13.2 10.5Q13 11.3 12.2 11.3H1.4Q0.6 11.3 0.8 10.5L3 1.2Q3.2 0.3 4 0.3Z" fill="#555"/><path d="M0.9 11.5Q0 13.8 1.8 13.8H12.4L13.2 11.3" fill="none" stroke="#555" stroke-width="1.1"/><path d="M5.5 3.2H12M5 5.2H11.5" stroke="#fff" stroke-width=".9"/></svg><span>财务档案</span><b></b></div>
  <div class="nav" style="top:256.60px"><svg style="left:10.5px;top:14.5px" width="18" height="12" viewBox="0 0 18 12"><path d="M4.2 0.3H7.8L7.4 11.7H0.3Z" fill="#555"/><path d="M10.2 0.3H13.8L17.7 11.7H10.6Z" fill="#555"/><rect x="7.5" y="4.6" width="3" height="2.4" fill="#555"/></svg><span>渠道管理</span><b></b></div>
  <div class="nav" style="top:297.72px"><svg style="left:10.5px;top:13.3px" width="15" height="14" viewBox="0 0 14 14"><path d="M6 0h2l.4 2.2 1.4.6 1.9-1.3 1.4 1.4-1.3 1.9.6 1.4L14 6v2l-2.2.4-.6 1.4 1.3 1.9-1.4 1.4-1.9-1.3-1.4.6L8 14H6l-.4-2.2-1.4-.6-1.9 1.3-1.4-1.4 1.3-1.9-.6-1.4L0 8V6l2.2-.4.6-1.4-1.3-1.9 1.4-1.4 1.9 1.3 1.4-.6z" fill="#4a4a4a"/><circle cx="7" cy="7" r="2.5" fill="#fff"/></svg><span>系统设置</span><b></b></div>
  <div class="nav" style="top:338.84px;border-bottom:none"><svg style="left:10.5px;top:12.8px" width="19" height="15" viewBox="0 0 19 15"><path d="M10 1.5H3A2.2 2.2 0 0 0 0.8 3.7V11.6A2.2 2.2 0 0 0 3 13.8H11.2A2.2 2.2 0 0 0 13.4 11.6V9.5" fill="none" stroke="#555" stroke-width="1.3"/><path d="M16 0.5L18 2.5L9 11.3L6.3 12.2L7.2 9.5Z" fill="#555"/><path d="M7.3 11L8.3 10" stroke="#fff" stroke-width=".8"/></svg><span>基础设置</span><b></b></div>
  <div class="abs" style="left:0;top:816px;width:192px;height:30px;background:#787878">
    <svg class="abs" style="left:17px;top:12px" width="16" height="16" viewBox="0 0 14 14"><path d="M6 0h2l.4 2.2 1.4.6 1.9-1.3 1.4 1.4-1.3 1.9.6 1.4L14 6v2l-2.2.4-.6 1.4 1.3 1.9-1.4 1.4-1.9-1.3-1.4.6L8 14H6l-.4-2.2-1.4-.6-1.9 1.3-1.4-1.4 1.3-1.9-.6-1.4L0 8V6l2.2-.4.6-1.4-1.3-1.9 1.4-1.4 1.9 1.3 1.4-.6z" fill="#fff"/><circle cx="7" cy="7" r="2.2" fill="#787878"/></svg>
    <svg class="abs" style="left:72px;top:10px" width="18" height="17" viewBox="0 0 18 17"><path d="M7.5 0h3v7h3l-4.5 5-4.5-5h3z" fill="#fff"/><path d="M0 11h5l4 3 4-3h5v6H0z" fill="#fff"/></svg>
  </div>
</div>


</body></html>
